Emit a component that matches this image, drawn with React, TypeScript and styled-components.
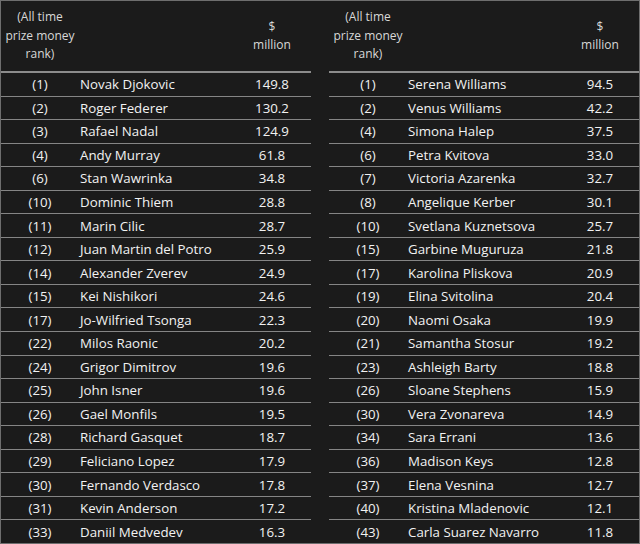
import React from 'react'
import styled, { createGlobalStyle } from 'styled-components'

const men: [string, string, string][] = [
    ["(1)", "Novak Djokovic", "149.8"],
    ["(2)", "Roger Federer", "130.2"],
    ["(3)", "Rafael Nadal", "124.9"],
    ["(4)", "Andy Murray", "61.8"],
    ["(6)", "Stan Wawrinka", "34.8"],
    ["(10)", "Dominic Thiem", "28.8"],
    ["(11)", "Marin Cilic", "28.7"],
    ["(12)", "Juan Martin del Potro", "25.9"],
    ["(14)", "Alexander Zverev", "24.9"],
    ["(15)", "Kei Nishikori", "24.6"],
    ["(17)", "Jo-Wilfried Tsonga", "22.3"],
    ["(22)", "Milos Raonic", "20.2"],
    ["(24)", "Grigor Dimitrov", "19.6"],
    ["(25)", "John Isner", "19.6"],
    ["(26)", "Gael Monfils", "19.5"],
    ["(28)", "Richard Gasquet", "18.7"],
    ["(29)", "Feliciano Lopez", "17.9"],
    ["(30)", "Fernando Verdasco", "17.8"],
    ["(31)", "Kevin Anderson", "17.2"],
    ["(33)", "Daniil Medvedev", "16.3"],
]

const women: [string, string, string][] = [
    ["(1)", "Serena Williams", "94.5"],
    ["(2)", "Venus Williams", "42.2"],
    ["(4)", "Simona Halep", "37.5"],
    ["(6)", "Petra Kvitova", "33.0"],
    ["(7)", "Victoria Azarenka", "32.7"],
    ["(8)", "Angelique Kerber", "30.1"],
    ["(10)", "Svetlana Kuznetsova", "25.7"],
    ["(15)", "Garbine Muguruza", "21.8"],
    ["(17)", "Karolina Pliskova", "20.9"],
    ["(19)", "Elina Svitolina", "20.4"],
    ["(20)", "Naomi Osaka", "19.9"],
    ["(21)", "Samantha Stosur", "19.2"],
    ["(23)", "Ashleigh Barty", "18.8"],
    ["(26)", "Sloane Stephens", "15.9"],
    ["(30)", "Vera Zvonareva", "14.9"],
    ["(34)", "Sara Errani", "13.6"],
    ["(36)", "Madison Keys", "12.8"],
    ["(37)", "Elena Vesnina", "12.7"],
    ["(40)", "Kristina Mladenovic", "12.1"],
    ["(43)", "Carla Suarez Navarro", "11.8"],
]

const Global = createGlobalStyle`
body {
    margin: 0;
    background: #1b1b1b;
}
`

const Frame = styled.div`
width: 640px;
height: 544px;
box-sizing: border-box;
border: 1px solid #6e6e6e;
background: #1b1b1b;
display: flex;
flex-direction: row;
gap: 18px;
font-family: "Open Sans", "DejaVu Sans", sans-serif;
color: #f2f2f2;
`

const Table = styled.div`
width: 310px;
display: flex;
flex-direction: column;
`

const Head = styled.div`
height: 70px;
display: grid;
grid-template-columns: 78px 1fr 78px;
align-items: center;
border-bottom: 2px solid #8c8c8c;
font-size: 12px;
line-height: 18.5px;
color: #d8d8d8;
`

const Row = styled.div`
height: 22.55px;
display: grid;
grid-template-columns: 78px 1fr 78px;
align-items: center;
border-top: 1px solid #858585;
font-size: 13.3px;
&:first-child {
    border-top: none;
}
`

const Rank = styled.div`
text-align: center;
`

const Name = styled.div`
padding-left: 1px;
white-space: nowrap;
`

const Money = styled.div`
text-align: center;
`

const Body = styled.div`
display: flex;
flex-direction: column;
`

const Ranking = ({ rows }: { rows: [string, string, string][] }) => (
    <Table>
        <Head>
            <Rank>(All time<br />prize money<br />rank)</Rank>
            <div />
            <Money>$<br />million</Money>
        </Head>
        <Body>
            {rows.map(([rank, name, money]) => (
                <Row key={name}>
                    <Rank>{rank}</Rank>
                    <Name>{name}</Name>
                    <Money>{money}</Money>
                </Row>
            ))}
        </Body>
    </Table>
)

const App = () => {
    return (
        <>
            <Global />
            <Frame>
                <Ranking rows={men} />
                <Ranking rows={women} />
            </Frame>
        </>
    )
}

export default App
